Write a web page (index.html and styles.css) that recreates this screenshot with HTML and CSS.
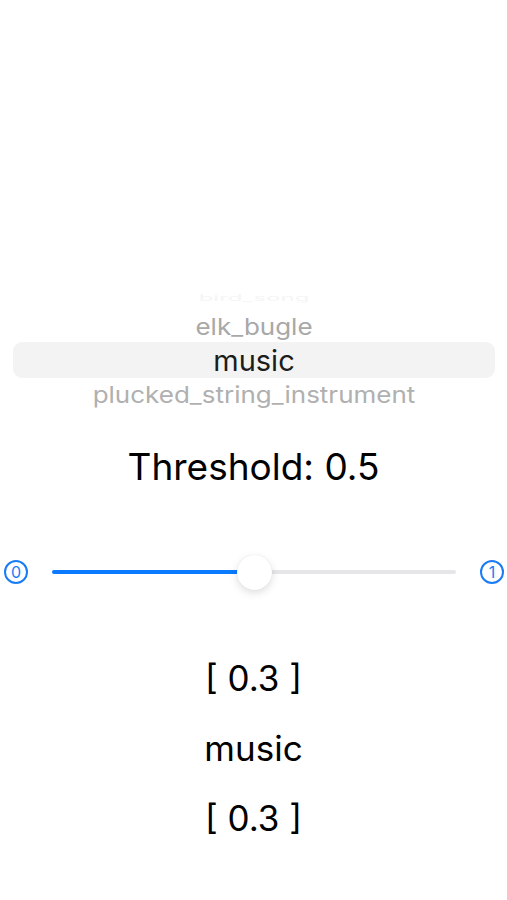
FILE: index.html
```html
<!DOCTYPE html>
<html lang="en">
<head>
    <meta charset="UTF-8">
    <meta name="viewport" content="width=device-width, initial-scale=1.0">
    <title>Threshold</title>
    <link rel="stylesheet" href="styles.css">
</head>
<body>
    <div class="screen">
        <div class="picker">
            <div class="row faint">bird_song</div>
            <div class="row near">elk_bugle</div>
            <div class="row selected"><span>music</span></div>
            <div class="row near">plucked_string_instrument</div>
        </div>

        <div class="threshold">Threshold: 0.5</div>

        <div class="slider">
            <span class="end-icon">0</span>
            <div class="track">
                <div class="fill" style="width: 50%"></div>
                <div class="thumb" style="left: 50%"></div>
            </div>
            <span class="end-icon">1</span>
        </div>

        <div class="results">
            <div class="result">[ 0.3 ]</div>
            <div class="result">music</div>
            <div class="result">[ 0.3 ]</div>
        </div>
    </div>
</body>
</html>
```

FILE: styles.css
```css
body {
    margin: 0;
    background: #fff;
    font-family: Inter, "Liberation Sans", Arial, sans-serif;
    color: #000;
}
.screen {
    width: 507px;
    height: 900px;
    display: flex;
    flex-direction: column;
    padding-top: 286px;
    box-sizing: border-box;
}
.picker {
    display: flex;
    flex-direction: column;
    align-items: stretch;
    padding: 0 12px 0 13px;
}
.row {
    display: flex;
    justify-content: center;
    align-items: center;
    white-space: nowrap;
}
.faint {
    height: 24px;
    font-size: 24px;
    color: #f5f5f5;
    transform: scaleY(0.35);
}
.near {
    height: 32px;
    font-size: 26px;
    color: #a8a8a8;
    transform: scaleY(0.88);
}
.near:last-child {
    color: #b0b0b0;
}
.selected {
    height: 36px;
    font-size: 29px;
    color: #1c1c1c;
    background: #f3f3f3;
    border-radius: 9px;
}
.threshold {
    margin-top: 32px;
    height: 48px;
    display: flex;
    justify-content: center;
    align-items: center;
    font-size: 37px;
}
.slider {
    margin-top: 64px;
    height: 36px;
    display: flex;
    align-items: center;
    padding: 0 3px 0 4px;
    gap: 24px;
}
.end-icon {
    width: 20px;
    height: 20px;
    border: 2px solid #1a7cf5;
    border-radius: 50%;
    color: #1a7cf5;
    font-size: 16px;
    display: flex;
    justify-content: center;
    align-items: center;
    flex-shrink: 0;
}
.track {
    flex: 1;
    height: 4px;
    border-radius: 2px;
    background: #e6e6e9;
    position: relative;
}
.fill {
    height: 100%;
    border-radius: 2px;
    background: #0a7aff;
}
.thumb {
    position: absolute;
    top: 50%;
    width: 35px;
    height: 35px;
    margin: -17.5px 0 0 -17.5px;
    border-radius: 50%;
    background: #fff;
    box-shadow: 0 3px 8px rgba(0, 0, 0, 0.13), 0 0 1px rgba(0, 0, 0, 0.12);
}
.results {
    margin-top: 53px;
    display: flex;
    flex-direction: column;
}
.result {
    height: 70px;
    display: flex;
    justify-content: center;
    align-items: center;
    font-size: 35px;
}
```
